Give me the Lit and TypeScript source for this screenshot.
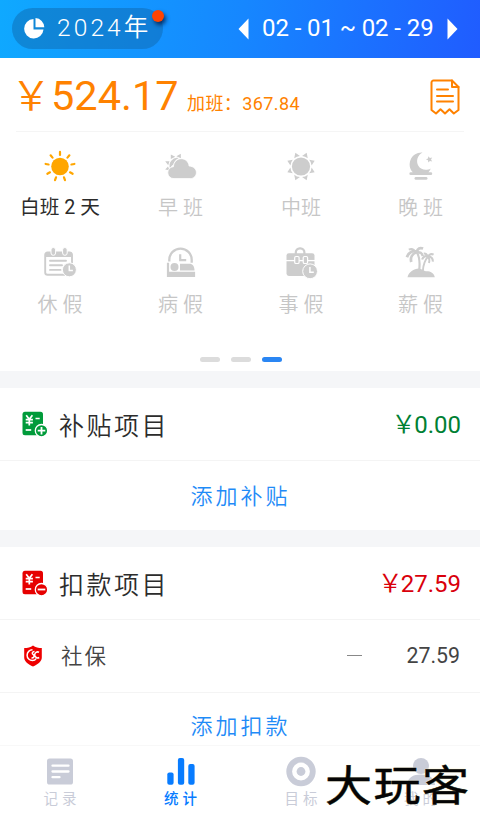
import { LitElement, html, css, svg } from "lit";
import { customElement, property } from "lit/decorators.js";

const wedge = (n: number, draw: (a: number) => unknown, start = 0) =>
  Array.from({ length: n }, (_, i) => draw(start + (i * 360) / n));

const icons: Record<string, unknown> = {
  sun: svg`<g fill="#ffa600"><circle cx="16" cy="16.500" r="8.800"/></g>
    <g stroke="#ffa600" stroke-width="2.200" stroke-linecap="round">
      ${wedge(9, (a) => svg`<path d="M16 4.900V1.900" transform="rotate(${a} 16 16.500)"/>`)}</g>`,
  cloudsun: svg`<g fill="#cdcdcd">
      <path d="M5.800 9 5.800 4.600 10.300 6.800zM11.400 6.300 15.800 3.800 15.900 8.300zM4.500 11.200.2 11.300 3.200 15.300zM3 16.600.2 19.600 4.600 20.200z"/>
      <path d="M5.200 18.600a7.700 7.700 0 0 1 8.600-10.600c-3 1.400-4.800 3.600-5.400 6.500-1.600.8-2.700 2.300-3.200 4.100z"/>
      <path d="M9 28.600a5.700 5.700 0 0 1-.6-11.900c.3-5 3.800-8 7.800-8 4.300 0 7.500 3.100 7.900 7.300 4.500.3 7.300 3.100 7.300 6.500 0 3.500-2.500 6.100-6 6.100z" stroke="#fff" stroke-width=".8"/></g>`,
  sunsharp: svg`<g fill="#cdcdcd"><circle cx="16" cy="16.500" r="9.100"/>
      ${wedge(8, (a) => svg`<path d="M12.900 6.300 16 1.700 19.100 6.300Q16 5.300 12.900 6.300z" transform="rotate(${a} 16 16.500)"/>`, 22.5)}</g>`,
  moon: svg`<g fill="#cdcdcd"><path d="M17.500 2.600C12 5.500 10.800 11.800 13.500 16c2.500 4 8 5 12.300 2.400-.6 1.600-1.400 2.700-2.400 3.800h2.400a1.400 1.400 0 0 1 0 2.900H5.800a1.400 1.400 0 0 1 0-2.900h2C4.500 19 3.900 14 5.500 10 7.500 5.300 11.900 2.300 17.500 2.600z"/>
      <rect x="9.500" y="27" width="13" height="2.800" rx="1.400"/>
      <path d="m23.300 6.300 1.600 1.600 2.300-.5-1.200 2.100 1.200 2-2.300-.5-1.600 1.600-.3-2.300-2.100-1 2.100-.9z"/></g>`,
  calendar: svg`<g fill="none" stroke="#cdcdcd"><path d="M21 27.700H3.500a2.300 2.300 0 0 1-2.300-2.300V7.700a2.300 2.300 0 0 1 2.300-2.300h22.200A2.300 2.300 0 0 1 28 7.700V16" stroke-width="1.900"/>
      <path d="M6 13.700h16M6 18.200h12M6 22.900h10.500" stroke-width="1.900" stroke-linecap="round"/></g>
      <path d="M2 5h25.500v5H2z" fill="#cdcdcd"/>
      <g fill="#cdcdcd" stroke="#fff" stroke-width="1"><rect x="7" y=".5" width="4.600" height="7.800" rx="2.300"/><rect x="18.600" y=".5" width="4.600" height="7.800" rx="2.300"/></g>
      <circle cx="25.400" cy="22.800" r="7" fill="#cdcdcd" stroke="#fff" stroke-width="1"/><path d="M25.300 18.500v5h3.600" stroke="#fff" stroke-width="1.500" fill="none"/>`,
  bed: svg`<path d="M4.300 14.500v-1.700a11.200 11.200 0 0 1 22.400 0v3" fill="none" stroke="#cdcdcd" stroke-width="2.300"/>
      <path d="M15.200 7.200v6h6" fill="none" stroke="#cdcdcd" stroke-width="2.200"/>
      <g fill="#cdcdcd"><path d="M1.900 15.700h2.200v9h26V30H1.900z"/><circle cx="9.500" cy="20" r="4"/>
      <path d="M15 16.800h9.500c3 0 5 2.700 5 6.700H15z"/></g>`,
  briefcase: svg`<path d="M10.800 7V5.400A4 4 0 0 1 14.800 1.300h.6a4 4 0 0 1 4 4.100V7" fill="none" stroke="#cdcdcd" stroke-width="2.200"/>
      <rect x="1.500" y="6.200" width="28" height="22.800" rx="2.400" fill="#cdcdcd"/>
      <path d="M1 13.600h30" stroke="#fff" stroke-width="1.300"/>
      <g fill="#cdcdcd" stroke="#fff" stroke-width="1.200"><rect x="9.700" y="9.500" width="4.400" height="7" rx="1.300"/><rect x="18.200" y="9.500" width="4.400" height="7" rx="1.300"/></g>
      <circle cx="25.100" cy="24.300" r="7.400" fill="#cdcdcd" stroke="#fff" stroke-width="1"/><path d="M24.900 20v5.300h3.900" stroke="#fff" stroke-width="1.500" fill="none"/>`,
  palm: svg`<g transform="translate(-1.200 -.8)"><path d="M3.700 31C5 25.600 10 22.500 15 22.300 18 22.500 20 25 22 25c4-.4 8.200 1.500 9 6z" fill="#cdcdcd"/>
      <g fill="none" stroke="#cdcdcd" stroke-width="1.900"><path d="M12.800 6c3 4 3.400 11 2.600 18" stroke-width="2.200"/><path d="M24.300 10.500C21 14 19.400 19 19 25"/>
      <path d="M12.800 6C9.500 3.700 5.500 5.200 3.100 11" stroke-width="2.800"/><path d="M12.700 6C8.500 7.500 6.300 11.500 7.500 15.800" stroke-width="2.800"/><path d="M12.800 6c1-3.800 3.300-4.800 6.500-3.600" stroke-width="2.700"/><path d="M12 6.200C10 2.800 7.700 2 5 3.500" stroke-width="2"/><path d="M12.500 6.200c3.800-.8 6 .8 6.400 3.700" stroke-width="2.500"/>
      <path d="M24.300 10.600c-2.600-1.600-5-.3-6 2.700" stroke-width="2.200"/><path d="M24.300 10.600c1.300-2.600 3.400-3.300 5.500-2.200" stroke-width="2.200"/><path d="M24.200 10.600c3.200-.4 5.300 1.700 4.800 4.900" stroke-width="2.200"/><path d="M24 10.300c-1-2.400-2-3.300-4-3"/><path d="M24.300 10.600c1.400 1.600 1.500 4 .9 6.200"/></g></g>`,
};

const shifts = [
  { icon: "sun", label: "白班 2 天", cls: "on" },
  { icon: "cloudsun", label: "早班", cls: "wide" },
  { icon: "sunsharp", label: "中班", cls: "" },
  { icon: "moon", label: "晚班", cls: "wide" },
  { icon: "calendar", label: "休假", cls: "wide" },
  { icon: "bed", label: "病假", cls: "wide" },
  { icon: "briefcase", label: "事假", cls: "wide" },
  { icon: "palm", label: "薪假", cls: "wide" },
];

const tabs = [
  { label: "记录", active: false, icon: svg`<rect x="3" y="2.500" width="26" height="26" rx="2.600" fill="#c9ccd8"/><path d="M8.500 9.700h16M8.500 15.500h16M8.500 21.200h7" stroke="#fff" stroke-width="2.300" stroke-linecap="round"/>` },
  { label: "统计", active: true, icon: svg`<g fill="#087cff"><rect x="2.300" y="16.500" width="6.300" height="12.200" rx="2"/><rect x="12.900" y="2" width="6.300" height="26.700" rx="2"/><rect x="23.300" y="8" width="6.300" height="20.700" rx="2"/></g>` },
  { label: "目标", active: false, icon: svg`<circle cx="16" cy="15.500" r="11.800" fill="none" stroke="#c9ccd8" stroke-width="5.800"/><circle cx="16" cy="15.500" r="4.400" fill="#c9ccd8"/>` },
  { label: "我的", active: false, icon: svg`<circle cx="16" cy="10" r="8" fill="#c9ccd8"/><path d="M2 29C2.500 21.500 8 18.500 16 18.500s13.500 3 14 10.500z" fill="#c9ccd8"/>` },
];

@customElement("bill-icon")
class BillIcon extends LitElement {
  @property() color = "#009b3a";
  @property({ type: Boolean }) plus = false;
  static styles = css`:host, svg { display: block; width: 26px; height: 26px; }`;
  render() {
    return html`<svg viewBox="0 0 26 26">
      <rect x=".5" y=".7" width="20.500" height="23.500" rx="2.500" fill=${this.color}/>
      <g fill="none" stroke="#fff" stroke-width="1.700"><path d="m4.200 4.300 3.100 4 3.100-4M7.300 8.300v6.300M3.700 8.700h7.200M3.700 11.700h7.200M13.500 7.500h4.200"/><path d="M3.700 19h5.500"/></g>
      <circle cx="19.500" cy="19.700" r="6.200" fill=${this.color} stroke="#fff" stroke-width="1.300"/>
      <path d=${this.plus ? "M15.700 19.700h7.600M19.500 15.900v7.600" : "M15.700 19.500h7.600"} stroke="#fff" stroke-width="1.800"/>
    </svg>`;
  }
}

@customElement("app-root")
class AppRoot extends LitElement {
  static styles = css`
    :host { display: flex; flex-direction: column; position: relative; width: 480px; height: 819px; overflow: hidden; box-sizing: border-box; background: #fff; color: #2c2c2c; font-family: Roboto, "Noto Sans CJK SC", sans-serif; }
    * { box-sizing: border-box; }
    svg { display: block; flex: none; }
    span { white-space: pre; }
    header { height: 58px; flex: none; display: flex; align-items: center; justify-content: space-between; padding: 0 22px 1px 12px; background: linear-gradient(100deg, #0fa9ff, #1687ff 50%, #205cff); color: #fff; margin-bottom: 1px; }
    .pill { position: relative; display: flex; align-items: center; width: 151px; height: 41px; border-radius: 21px; padding-left: 12px; background: rgba(14, 101, 170, .47); }
    .year { font-size: 24.500px; line-height: 41px; font-weight: 350; letter-spacing: 3.100px; margin-left: 12px; margin-top: -2px; }
    .year b { font-weight: 350; letter-spacing: 0; }
    .dot { position: absolute; right: -1px; top: 2px; width: 12px; height: 12px; border-radius: 50%; background: #ff4300; box-shadow: 2px 3px 4px rgba(0, 20, 60, .75); }
    .range { display: flex; align-items: center; }
    .dates { font-size: 24px; line-height: 40px; font-weight: 400; letter-spacing: -.1px; margin: -1px 12px 0 13px; width: 173px; }
    .sum { height: 73px; flex: none; margin: 0 16px; border-bottom: 1px solid #f5f5f5; display: flex; align-items: baseline; color: #ff8200; }
    .yen { width: 39px; font: 350 40px/68px "Noto Sans CJK SC", sans-serif; margin-left: -5px; margin-right: 1px; }
    .total { font-size: 41.500px; line-height: 68px; width: 136px; }
    .extra { font-size: 18px; line-height: 60px; letter-spacing: .4px; }
    .receipt { margin-left: auto; align-self: center; margin-top: 3px; margin-right: 4px; }
    .grid { height: 225px; flex: none; display: grid; grid-template-columns: 120px 121px 120px 119px; grid-template-rows: 97px 97px; padding-top: 18px; }
    .cell { display: flex; flex-direction: column; align-items: center; color: #c6c6c6; font-size: 20px; line-height: 26px; font-weight: 350; }
    .cell span { margin-top: 13px; }
    .cell .wide { letter-spacing: 5px; margin-right: -5px; }
    .cell .on { color: #2b2b2b; font-size: 19.700px; font-weight: 400; }
    .pager { flex: none; height: 14px; display: flex; justify-content: center; gap: 11px; padding-left: 1px; }
    .pager i { width: 20px; height: 5px; border-radius: 3px; background: #dcdcdc; }
    .pager i.cur { background: #2a86f3; }
    .gap { height: 17px; flex: none; background: #f5f6f8; }
    .row { flex: none; display: flex; align-items: center; border-bottom: 1px solid #f4f4f4; }
    .title { padding: 0 19px 0 22px; height: 73px; }
    .title .name { font-size: 25px; letter-spacing: 2.500px; margin-left: 11px; flex: 1; font-weight: 350; }
    .money { font-size: 24px; line-height: 36px; margin-top: -1px; }
    .money b { font: 350 25px/36px "Noto Sans CJK SC", sans-serif; margin-right: -2px; }
    .green { color: #008033; }
    .red { color: #d9000b; }
    .add { flex: none; display: flex; align-items: center; justify-content: center; height: 69px; color: #1f8bf7; font-size: 22px; font-weight: 350; letter-spacing: 3px; padding: 0 0 4px 1px; }
    .item { height: 73px; padding: 0 20px 0 23px; color: #444; }
    .item .name { font-size: 21.500px; letter-spacing: 2px; margin: -4px 0 0 18px; flex: 1; font-weight: 350; }
    .dash { width: 15px; height: 1.500px; background: #888; margin-right: 45px; margin-top: -1px; }
    .item .val { font-size: 21.300px; margin-top: -2px; }
    .last { height: 52px; padding-top: 14px; }
    nav { flex: none; height: 75px; display: grid; grid-template-columns: 120px 121px 120px 119px; border-top: 1px solid #f8f8f8; padding-top: 10px; background: #fff; }
    .tab { display: flex; flex-direction: column; align-items: center; color: #c9ccd8; font-size: 14.500px; line-height: 20px; }
    .tab span { letter-spacing: 4px; margin: 2px -4px 0 0; }
    .tab.active { color: #087cff; font-weight: 500; }
    .mark { position: absolute; left: 325px; top: 751px; font: 400 47px/64px "Noto Sans CJK SC", sans-serif; letter-spacing: 1.500px; color: #050505; -webkit-text-stroke: .5px #050505; text-shadow: 0 0 1px #f7efc0, 0 0 2px #f7efc0; transform: scaleY(.9); }
  `;

  render() {
    return html`
      <header>
        <div class="pill">
          <svg width="21" height="21" viewBox="0 0 21 21" fill="#fff"><path d="M9.500 1A9.700 9.700 0 1 0 19.500 11.500H9.500z"/><path d="M11.500 0A9.500 9.500 0 0 1 20.300 9.200h-8.800z"/></svg>
          <span class="year">2024<b>年</b></span><i class="dot"></i>
        </div>
        <div class="range">
          <svg width="11" height="22" viewBox="0 0 11 22"><path d="M10.500.5v21L.5 11z" fill="#fff"/></svg>
          <span class="dates">02 - 01 ~ 02 - 29</span>
          <svg width="11" height="22" viewBox="0 0 11 22"><path d="M.5.500v21L10.500 11z" fill="#fff"/></svg>
        </div>
      </header>
      <section class="sum">
        <span class="yen">￥</span><span class="total">524.17</span><span class="extra">加班：367.84</span>
        <svg class="receipt" width="30" height="36" viewBox="0 0 30 36" fill="none" stroke="#ff8200" stroke-width="2" stroke-linejoin="round" stroke-linecap="round"><path d="M22 1.500H3.500a2 2 0 0 0-2 2V31L6 34.500l4.500-4.300 4.500 4.300 4.500-4.300 4.300 4.300L28.500 31V8z"/><path d="M22 1.500V8h6.500M7 10.500h11M7 17h16M7 22.500h16"/></svg>
      </section>
      <section class="grid">
        ${shifts.map((s) => html`<div class="cell"><svg width="32" height="32" viewBox="0 0 32 32" overflow="visible">${icons[s.icon]}</svg><span class=${s.cls}>${s.label}</span></div>`)}
      </section>
      <div class="pager"><i></i><i></i><i class="cur"></i></div>
      <div class="gap"></div>
      <div class="row title"><bill-icon plus></bill-icon><span class="name">补贴项目</span><span class="money green"><b>￥</b>0.00</span></div>
      <div class="add">添加补贴</div>
      <div class="gap"></div>
      <div class="row title"><bill-icon color="#e60000"></bill-icon><span class="name">扣款项目</span><span class="money red"><b>￥</b>27.59</span></div>
      <div class="row item">
        <svg width="20" height="22" viewBox="0 0 20 22"><path d="M10 .5c2.500 1.800 5.500 2.600 8.800 2.600v9.400c0 4-4 7-8.800 9-4.800-2-8.800-5-8.800-9V3.100C4.500 3.100 7.500 2.300 10 .5z" fill="#e00"/><path d="M9.500 4.800a5.400 5.400 0 1 0 0 10.800c1.700 0 2.900-.8 3.500-2M8.500 13c2.500 0 3.500-2 1.800-3.300C8.500 8.500 9.200 6.500 11.500 6.500M16 7.200a3 3 0 1 0 .2 5.300" fill="none" stroke="#fff" stroke-width="1.500"/></svg>
        <span class="name">社保</span><i class="dash"></i><span class="val">27.59</span>
      </div>
      <div class="add last">添加扣款</div>
      <nav>${tabs.map((t) => html`<div class="tab ${t.active ? "active" : ""}"><svg width="32" height="32" viewBox="0 0 32 32">${t.icon}</svg><span>${t.label}</span></div>`)}</nav>
      <div class="mark">大玩客</div>
    `;
  }
}
